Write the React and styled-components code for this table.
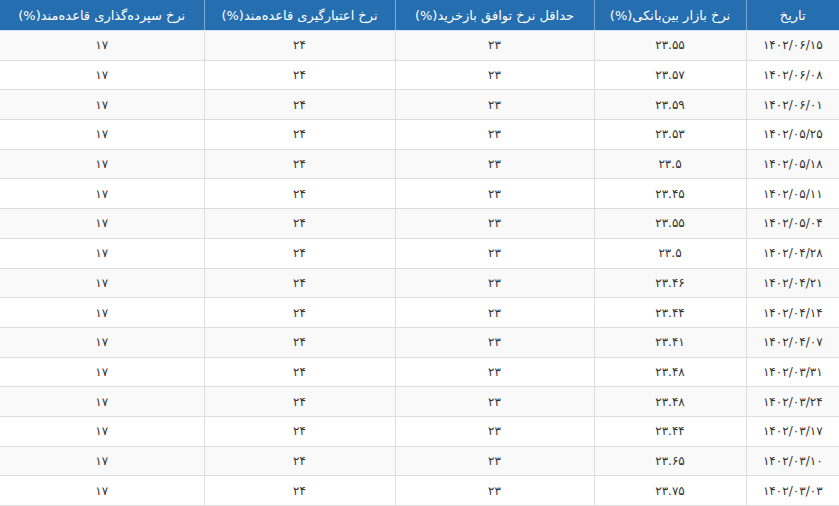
import React from 'react';
import styled, { createGlobalStyle } from 'styled-components';

const GlobalStyle = createGlobalStyle`
  html, body {
    margin: 0;
    padding: 0;
    background: #ffffff;
  }
  body {
    font-family: "DejaVu Sans", "Noto Sans", sans-serif;
  }
`;

const columns = [
  { title: 'تاریخ', width: 93 },
  { title: 'نرخ بازار بین‌بانکی(%)', width: 152 },
  { title: 'حداقل نرخ توافق بازخرید(%)', width: 199 },
  { title: 'نرخ اعتبارگیری قاعده‌مند(%)', width: 191 },
  { title: 'نرخ سپرده‌گذاری قاعده‌مند(%)', width: 204 },
];

const rates = [
  ['۱۴۰۲/۰۶/۱۵', '۲۳.۵۵'],
  ['۱۴۰۲/۰۶/۰۸', '۲۳.۵۷'],
  ['۱۴۰۲/۰۶/۰۱', '۲۳.۵۹'],
  ['۱۴۰۲/۰۵/۲۵', '۲۳.۵۳'],
  ['۱۴۰۲/۰۵/۱۸', '۲۳.۵'],
  ['۱۴۰۲/۰۵/۱۱', '۲۳.۴۵'],
  ['۱۴۰۲/۰۵/۰۴', '۲۳.۵۵'],
  ['۱۴۰۲/۰۴/۲۸', '۲۳.۵'],
  ['۱۴۰۲/۰۴/۲۱', '۲۳.۴۶'],
  ['۱۴۰۲/۰۴/۱۴', '۲۳.۴۴'],
  ['۱۴۰۲/۰۴/۰۷', '۲۳.۴۱'],
  ['۱۴۰۲/۰۳/۳۱', '۲۳.۴۸'],
  ['۱۴۰۲/۰۳/۲۴', '۲۳.۴۸'],
  ['۱۴۰۲/۰۳/۱۷', '۲۳.۴۴'],
  ['۱۴۰۲/۰۳/۱۰', '۲۳.۶۵'],
  ['۱۴۰۲/۰۳/۰۳', '۲۳.۷۵'],
];

function App() {
  return (
    <>
      <GlobalStyle />
      <Wrapper>
        <RateTable>
          <colgroup>
            {columns.map((col) => (
              <col key={col.title} style={{ width: col.width }} />
            ))}
          </colgroup>
          <thead>
            <tr>
              {columns.map((col) => (
                <HeadCell key={col.title}>{col.title}</HeadCell>
              ))}
            </tr>
          </thead>
          <tbody>
            {rates.map(([date, bank], index) => (
              <Row key={date} striped={index % 2 === 0 ? 1 : 0}>
                <Cell>{date}</Cell>
                <Cell>{bank}</Cell>
                <Cell>۲۳</Cell>
                <Cell>۲۴</Cell>
                <Cell>۱۷</Cell>
              </Row>
            ))}
          </tbody>
        </RateTable>
      </Wrapper>
    </>
  );
}

export default App;

const Wrapper = styled.div`
  width: 839px;
  direction: rtl;
  overflow: hidden;
`;

const RateTable = styled.table`
  width: 839px;
  table-layout: fixed;
  border-collapse: collapse;
  border-spacing: 0;
`;

const HeadCell = styled.th`
  height: 30px;
  padding: 0 8px;
  background: #256eb0;
  color: #ffffff;
  font-size: 13px;
  font-weight: normal;
  text-align: center;
  white-space: nowrap;
  border-left: 1px solid #7ea9d3;
  border-bottom: 1px solid #d6e3f0;
  &:last-child {
    border-left: none;
  }
`;

const Row = styled.tr`
  background: ${(p) => (p.striped ? '#f9f9f9' : '#ffffff')};
`;

const Cell = styled.td`
  height: 28.7px;
  padding: 0 8px;
  font-size: 12px;
  color: #333333;
  text-align: center;
  border-left: 1px solid #dddddd;
  border-bottom: 1px solid #dddddd;
  &:last-child {
    border-left: none;
  }
`;
